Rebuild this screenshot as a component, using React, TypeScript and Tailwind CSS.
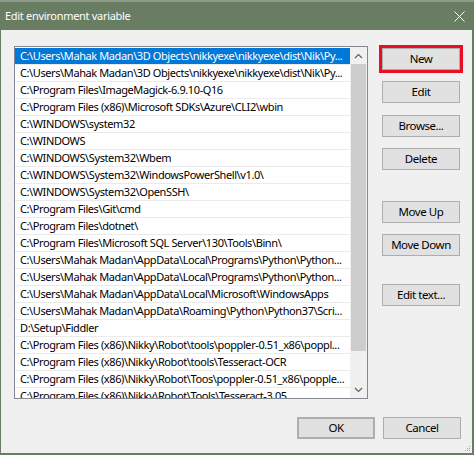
import React from "react";

const paths = [
  "C:\\Users\\Mahak Madan\\3D Objects\\nikkyexe\\nikkyexe\\dist\\Nik\\Py...",
  "C:\\Users\\Mahak Madan\\3D Objects\\nikkyexe\\nikkyexe\\dist\\Nik\\Py...",
  "C:\\Program Files\\ImageMagick-6.9.10-Q16",
  "C:\\Program Files (x86)\\Microsoft SDKs\\Azure\\CLI2\\wbin",
  "C:\\WINDOWS\\system32",
  "C:\\WINDOWS",
  "C:\\WINDOWS\\System32\\Wbem",
  "C:\\WINDOWS\\System32\\WindowsPowerShell\\v1.0\\",
  "C:\\WINDOWS\\System32\\OpenSSH\\",
  "C:\\Program Files\\Git\\cmd",
  "C:\\Program Files\\dotnet\\",
  "C:\\Program Files\\Microsoft SQL Server\\130\\Tools\\Binn\\",
  "C:\\Users\\Mahak Madan\\AppData\\Local\\Programs\\Python\\Python...",
  "C:\\Users\\Mahak Madan\\AppData\\Local\\Programs\\Python\\Python...",
  "C:\\Users\\Mahak Madan\\AppData\\Local\\Microsoft\\WindowsApps",
  "C:\\Users\\Mahak Madan\\AppData\\Roaming\\Python\\Python37\\Scri...",
  "D:\\Setup\\Fiddler",
  "C:\\Program Files (x86)\\Nikky\\Robot\\tools\\poppler-0.51_x86\\poppl...",
  "C:\\Program Files (x86)\\Nikky\\Robot\\tools\\Tesseract-OCR",
  "C:\\Program Files (x86)\\Nikky\\Robot\\Toos\\poppler-0.51_x86\\popple...",
  "C:\\Program Files (x86)\\Nikky\\Robot\\Tools\\Tesseract-3.05",
];

// Windows-style push button
const Btn = ({ label, className = "" }: { label: string; className?: string }) => (
  <div
    className={`w-[78px] h-[22px] flex items-center justify-center bg-[#e1e1e1] border border-[#adadad] text-[11.5px] tracking-[-0.45px] text-black ${className}`}
  >
    {label}
  </div>
);

const Chevron = ({ up }: { up?: boolean }) => (
  <svg width="9" height="6" viewBox="0 0 9 6">
    <path
      d={up ? "M1 5 L4.5 1.5 L8 5" : "M1 1 L4.5 4.5 L8 1"}
      fill="none"
      stroke="#606060"
      strokeWidth="1.2"
    />
  </svg>
);

export default function App() {
  return (
    <div
      className="w-[474px] h-[455px] bg-[#687d62] flex flex-col"
      style={{ fontFamily: '"Noto Sans", "Open Sans", sans-serif' }}
    >
      {/* TITLE BAR */}
      <div className="h-[30px] flex items-center justify-between border-t-2 border-[#8d9c88] pl-[5px] pr-[9px]">
        <span className="text-[11px] tracking-[-0.3px] text-white">Edit environment variable</span>
        <svg width="11" height="11" viewBox="0 0 11 11">
          <path d="M0.5 0.5 L10.5 10.5 M10.5 0.5 L0.5 10.5" stroke="#ffffff" strokeWidth="1" />
        </svg>
      </div>

      {/* BODY */}
      <div className="relative flex-1 ml-[1px] mr-[2px] mb-[2px] bg-[#f0f0f0] flex flex-col">
        <div className="flex pt-[16px] pl-[13px]">
          {/* LIST */}
          <div className="w-[354px] h-[353px] border border-[#828790] bg-white flex overflow-hidden">
            <div className="flex-1 min-w-0 pt-[1px] overflow-hidden">
              {paths.map((p, i) => (
                <div
                  key={i}
                  className={`h-[17px] leading-[16px] pl-[5px] text-[11px] tracking-[-0.4px] truncate border-b border-[#ebebeb] ${
                    i === 0 ? "bg-[#0078d7] text-white" : "text-black"
                  }`}
                >
                  {p}
                </div>
              ))}
            </div>
            {/* SCROLLBAR */}
            <div className="w-[17px] shrink-0 bg-[#f0f0f0] flex flex-col">
              <div className="h-[17px] flex items-center justify-center">
                <Chevron up />
              </div>
              <div className="h-[287px] mx-[1px] bg-[#cdcdcd]" />
              <div className="flex-1" />
              <div className="h-[17px] flex items-center justify-center">
                <Chevron />
              </div>
            </div>
          </div>

          {/* BUTTONS */}
          <div className="ml-[14px] pt-[2px] flex flex-col">
            <Btn label="New" className="outline-[3px] outline-solid outline-[#e81123]" />
            <Btn label="Edit" className="mt-[11px]" />
            <Btn label="Browse..." className="mt-[12px]" />
            <Btn label="Delete" className="mt-[11px]" />
            <Btn label="Move Up" className="mt-[31px]" />
            <Btn label="Move Down" className="mt-[11px]" />
            <Btn label="Edit text..." className="mt-[28px]" />
          </div>
        </div>

        {/* OK / CANCEL */}
        <div className="flex justify-end gap-[8px] pr-[11px] mt-[18px]">
          <Btn label="OK" className="w-[77px] border-[#0078d7] border-2" />
          <Btn label="Cancel" />
        </div>

        {/* resize grip */}
        <svg className="absolute right-[1px] bottom-[1px]" width="8" height="8" viewBox="0 0 8 8">
          <rect x="6" y="2" width="1" height="1" fill="#a0a0a0" />
          <rect x="4" y="4" width="1" height="1" fill="#a0a0a0" />
          <rect x="6" y="4" width="1" height="1" fill="#a0a0a0" />
          <rect x="2" y="6" width="1" height="1" fill="#a0a0a0" />
          <rect x="4" y="6" width="1" height="1" fill="#a0a0a0" />
          <rect x="6" y="6" width="1" height="1" fill="#a0a0a0" />
        </svg>
      </div>
    </div>
  );
}
